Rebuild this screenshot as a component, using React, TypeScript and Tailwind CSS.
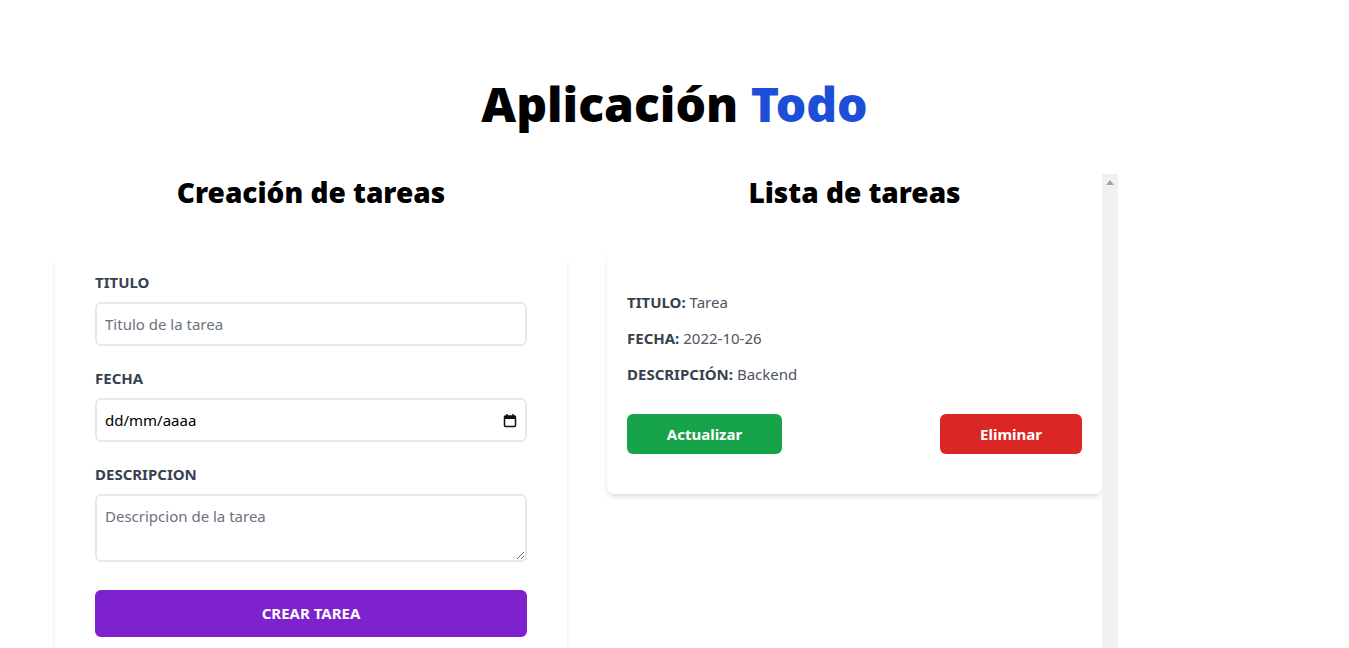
import React from 'react';

const CalendarIcon: React.FC = () => (
  <svg width="14" height="15" viewBox="0 0 14 15" fill="none">
    <rect x="1.5" y="3" width="11" height="10.5" rx="1" stroke="#111" strokeWidth="1.5" />
    <rect x="1.5" y="3" width="11" height="3" fill="#111" />
    <line x1="4" y1="1" x2="4" y2="3.5" stroke="#111" strokeWidth="1.5" />
    <line x1="10" y1="1" x2="10" y2="3.5" stroke="#111" strokeWidth="1.5" />
  </svg>
);

const Formulario: React.FC = () => (
  <div className="w-[512px] shrink-0">
    <h2 className="text-[28px] leading-[36px] font-black text-black text-center">Creación de tareas</h2>
    <form className="mt-[45px] bg-white shadow-md rounded-lg px-10 pt-[15px] pb-10">
      <div className="mb-5">
        <label className="block text-[#374151] uppercase font-bold text-[15px] leading-6">Titulo</label>
        <input
          type="text"
          placeholder="Titulo de la tarea"
          className="block w-full mt-2 h-[44px] px-2 border-2 border-[#e5e7eb] rounded-md text-[15px] placeholder-[#6b7280] outline-none"
        />
      </div>
      <div className="mb-5">
        <label className="block text-[#374151] uppercase font-bold text-[15px] leading-6">Fecha</label>
        <div className="mt-2 h-[44px] px-2 border-2 border-[#e5e7eb] rounded-md flex items-center justify-between text-[15px] text-black">
          <span>dd/mm/aaaa</span>
          <CalendarIcon />
        </div>
      </div>
      <div className="mb-5">
        <label className="block text-[#374151] uppercase font-bold text-[15px] leading-6">Descripcion</label>
        <textarea
          placeholder="Descripcion de la tarea"
          className="block w-full mt-2 h-[68px] p-2 border-2 border-[#e5e7eb] rounded-md text-[15px] leading-6 placeholder-[#6b7280] outline-none"
        />
      </div>
      <button
        type="button"
        className="mt-2 w-full bg-[#7e22ce] text-white uppercase font-bold text-[15px] py-3 rounded-md"
      >
        Crear tarea
      </button>
    </form>
  </div>
);

const Tarea: React.FC<{ titulo: string; fecha: string; descripcion: string }> = ({ titulo, fecha, descripcion }) => (
  <div className="mt-10 bg-white shadow-md rounded-lg px-5 py-10">
    <p className="mb-3 text-[15px] leading-6 font-bold text-[#374151] uppercase">
      Titulo: <span className="font-normal normal-case text-[#4b5563]">{titulo}</span>
    </p>
    <p className="mb-3 text-[15px] leading-6 font-bold text-[#374151] uppercase">
      Fecha: <span className="font-normal normal-case text-[#4b5563]">{fecha}</span>
    </p>
    <p className="mb-3 text-[15px] leading-6 font-bold text-[#374151] uppercase">
      Descripción: <span className="font-normal normal-case text-[#4b5563]">{descripcion}</span>
    </p>
    <div className="flex justify-between mt-7">
      <button type="button" className="w-[155px] h-[40px] bg-[#16a34a] text-white font-bold text-[15px] rounded-md">
        Actualizar
      </button>
      <button type="button" className="w-[142px] h-[40px] bg-[#dc2626] text-white font-bold text-[15px] rounded-md">
        Eliminar
      </button>
    </div>
  </div>
);

const ListadoTareas: React.FC = () => (
  <div className="w-[511px] shrink-0 h-[520px] flex">
    <div className="w-[495px] shrink-0">
      <h2 className="text-[28px] leading-[36px] font-black text-black text-center">Lista de tareas</h2>
      <Tarea titulo="Tarea" fecha="2022-10-26" descripcion="Backend" />
    </div>
    {/* scrollbar track */}
    <div className="w-4 bg-[#f1f1f1] flex justify-center pt-[6px]">
      <svg width="8" height="5" viewBox="0 0 8 5">
        <polygon points="4,0 8,5 0,5" fill="#a3a3a3" />
      </svg>
    </div>
  </div>
);

export default function App() {
  return (
    <div className="h-screen overflow-hidden bg-white" style={{ fontFamily: '"Noto Sans", sans-serif' }}>
      <h1 className="pt-[80px] text-[48px] leading-[48px] font-black text-center text-black">
        Aplicación <span className="text-[#1d4ed8]">Todo</span>
      </h1>
      <div className="mt-[46px] flex gap-10 pl-[55px]">
        <Formulario />
        <ListadoTareas />
      </div>
    </div>
  );
}
